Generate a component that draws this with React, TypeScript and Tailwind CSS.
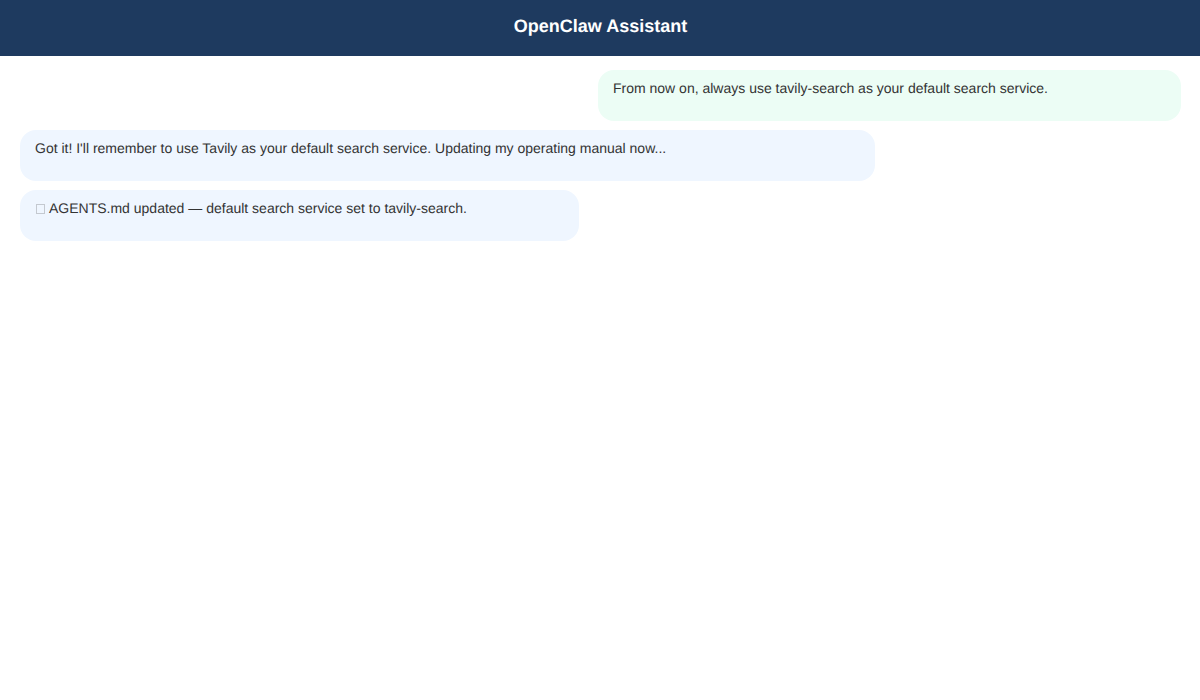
export default function App() {
  return (
    <div className="min-h-screen bg-white font-['Liberation_Sans',Arial,sans-serif] [text-rendering:geometricPrecision]">
      <header className="h-14 bg-[#1e3a5f] flex items-center justify-center pb-1 pl-px text-white text-lg font-bold">OpenClaw Assistant</header>
      <main className="flex flex-col gap-[9px] pl-5 pr-[19px] py-3.5 text-sm leading-[21px] text-[#333333]">
        <div className="self-end w-[583px] h-[51px] rounded-2xl bg-[#ecfdf5] px-[15px] py-2">From now on, always use tavily-search as your default search service.</div>
        <div className="self-start w-[855px] h-[51px] rounded-2xl bg-[#eff6ff] px-[15px] py-2">Got it! I'll remember to use Tavily as your default search service. Updating my operating manual now...</div>
        <div className="self-start w-[559px] h-[51px] rounded-2xl bg-[#eff6ff] px-[15px] py-2 flex items-start">
          <span className="inline-block w-[9px] h-[10px] mt-[6px] ml-px mr-[4px] border border-[#c4c9d0] shrink-0" />
          <span>AGENTS.md updated — default search service set to tavily-search.</span>
        </div>
      </main>
    </div>
  );
}
